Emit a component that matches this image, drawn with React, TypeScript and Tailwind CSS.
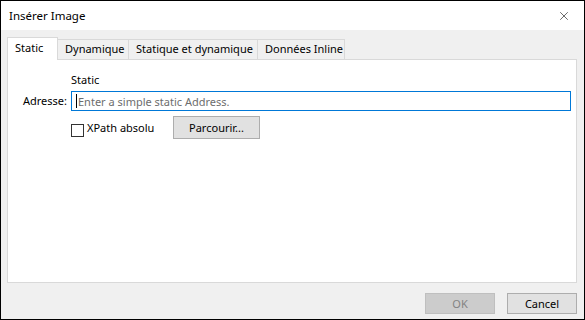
import { X } from 'lucide-react';

export default function App() {
  const tabs = [
    { label: 'Static', width: 'w-[51px]', active: true },
    { label: 'Dynamique', width: 'w-[72px]', active: false },
    { label: 'Statique et dynamique', width: 'w-[130px]', active: false },
    { label: 'Données Inline', width: 'w-[88px]', active: false },
  ];

  return (
    <div className="w-[585px] h-[320px] border border-black bg-[#f0f0f0] flex flex-col text-[11px] text-black font-['Noto_Sans','Open_Sans',sans-serif] overflow-hidden">
      <div className="h-[29px] bg-white flex items-center justify-between pl-2 pr-[13px] shrink-0">
        <span className="leading-none text-[11.5px]">Insérer Image</span>
        <X className="w-[14px] h-[14px] text-black" strokeWidth={1} />
      </div>

      <div className="flex-1 flex flex-col pl-[6px] pt-[7px]">
        <div className="flex items-end h-[22px] relative z-10">
          {tabs.map((tab) =>
            tab.active ? (
              <div
                key={tab.label}
                className={`${tab.width} h-[23px] -mb-px bg-white border border-b-0 border-[#d9d9d9] pl-[7px] pt-[2px] leading-[16px]`}
              >
                {tab.label}
              </div>
            ) : (
              <div
                key={tab.label}
                className={`${tab.width} h-[20px] -ml-px border border-b-0 border-[#d9d9d9] pl-[7px] pt-[1px] leading-[16px] whitespace-nowrap`}
              >
                {tab.label}
              </div>
            )
          )}
        </div>

        <div className="w-[570px] h-[224px] bg-white border border-[#d9d9d9] pt-[12px]">
          <div className="grid grid-cols-[63px_1fr] items-center">
            <div />
            <div className="h-[16px] leading-[16px]">Static</div>
            <div className="text-right pr-[4px] mt-[3px]">Adresse:</div>
            <div className="mt-[3px] mr-[5px] h-[20px] border border-[#0078d7] flex items-center pl-[4px]">
              <span className="w-px h-[14px] bg-black mr-[1px]" />
              <span className="text-[#6d6d6d] leading-none">Enter a simple static Address.</span>
            </div>
            <div />
            <div className="flex items-center mt-[5px]">
              <div className="w-[102px] flex items-center">
                <span className="w-[13px] h-[13px] border border-[#333333] bg-white mt-[6px] shrink-0" />
                <span className="ml-[3px] mt-[1px]">XPath absolu</span>
              </div>
              <button className="w-[87px] h-[23px] bg-[#e1e1e1] border border-[#adadad] leading-none">
                Parcourir...
              </button>
            </div>
          </div>
        </div>

        <div className="flex justify-end gap-[12px] w-[570px] mt-[10px]">
          <button className="w-[70px] h-[21px] bg-[#cccccc] border border-[#bfbfbf] text-[#838383] leading-none">
            OK
          </button>
          <button className="w-[70px] h-[21px] bg-[#e1e1e1] border border-[#adadad] leading-none">
            Cancel
          </button>
        </div>
      </div>
    </div>
  );
}
